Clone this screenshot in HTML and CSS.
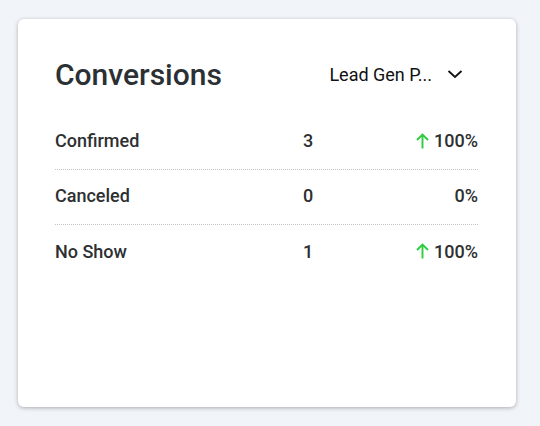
FILE: index.html
```html
<!DOCTYPE html>
<html lang="en">
<head>
    <meta charset="UTF-8">
    <meta name="viewport" content="width=device-width, initial-scale=1.0">
    <title>Conversions</title>
    <link rel="stylesheet" href="styles.css">
</head>
<body>
    <div class="card">
        <div class="card-header">
            <h2 class="title">Conversions</h2>
            <button class="select">
                <span>Lead Gen P...</span>
                <svg width="16" height="10" viewBox="0 0 16 10">
                    <path d="M1.5 2 L8 8 L14.5 2" fill="none" stroke="#111" stroke-width="1.8" />
                </svg>
            </button>
        </div>

        <div class="rows">
            <div class="row">
                <span class="label">Confirmed</span>
                <span class="count">3</span>
                <span class="pct">
                    <svg class="arrow" width="13" height="16" viewBox="0 0 13 16">
                        <path d="M6.5 15.5 V1.5 M1 7 L6.5 1.5 L12 7" fill="none" stroke="#2ecc40" stroke-width="1.9" />
                    </svg>100%
                </span>
            </div>
            <div class="row">
                <span class="label">Canceled</span>
                <span class="count">0</span>
                <span class="pct">0%</span>
            </div>
            <div class="row">
                <span class="label">No Show</span>
                <span class="count">1</span>
                <span class="pct">
                    <svg class="arrow" width="13" height="16" viewBox="0 0 13 16">
                        <path d="M6.5 15.5 V1.5 M1 7 L6.5 1.5 L12 7" fill="none" stroke="#2ecc40" stroke-width="1.9" />
                    </svg>100%
                </span>
            </div>
        </div>
    </div>
</body>
</html>
```

FILE: styles.css
```css
body {
    margin: 0;
    padding: 19px 24px 19px 18px;
    background-color: #f1f5f9;
    font-family: Roboto, "Liberation Sans", sans-serif;
}

.card {
    box-sizing: border-box;
    width: 498px;
    height: 388px;
    padding: 36px 38px 0 37px;
    background: white;
    border-radius: 6px;
    box-shadow: 0 1px 4px rgba(0, 0, 0, 0.3);
}

.card-header {
    display: flex;
    justify-content: space-between;
    align-items: center;
    height: 38px;
    margin-bottom: 22px;
}

.title {
    margin: 0;
    font-size: 30px;
    font-weight: 500;
    color: #2b3035;
}

.select {
    display: flex;
    align-items: center;
    gap: 15px;
    margin-right: 15px;
    padding: 0;
    border: none;
    background: none;
    font-family: inherit;
    font-size: 18px;
    color: #111;
    cursor: pointer;
}

.row {
    box-sizing: border-box;
    display: grid;
    grid-template-columns: 1fr 40px 150px;
    align-items: center;
    height: 55px;
    padding-bottom: 3px;
    border-bottom: 1px dotted #c4c4c4;
    font-size: 18px;
    font-weight: 500;
    color: #2d2f31;
}

.row:last-child {
    border-bottom: none;
}

.count {
    text-align: center;
}

.pct {
    display: flex;
    justify-content: flex-end;
    align-items: center;
}

.arrow {
    margin-right: 5px;
}
```
